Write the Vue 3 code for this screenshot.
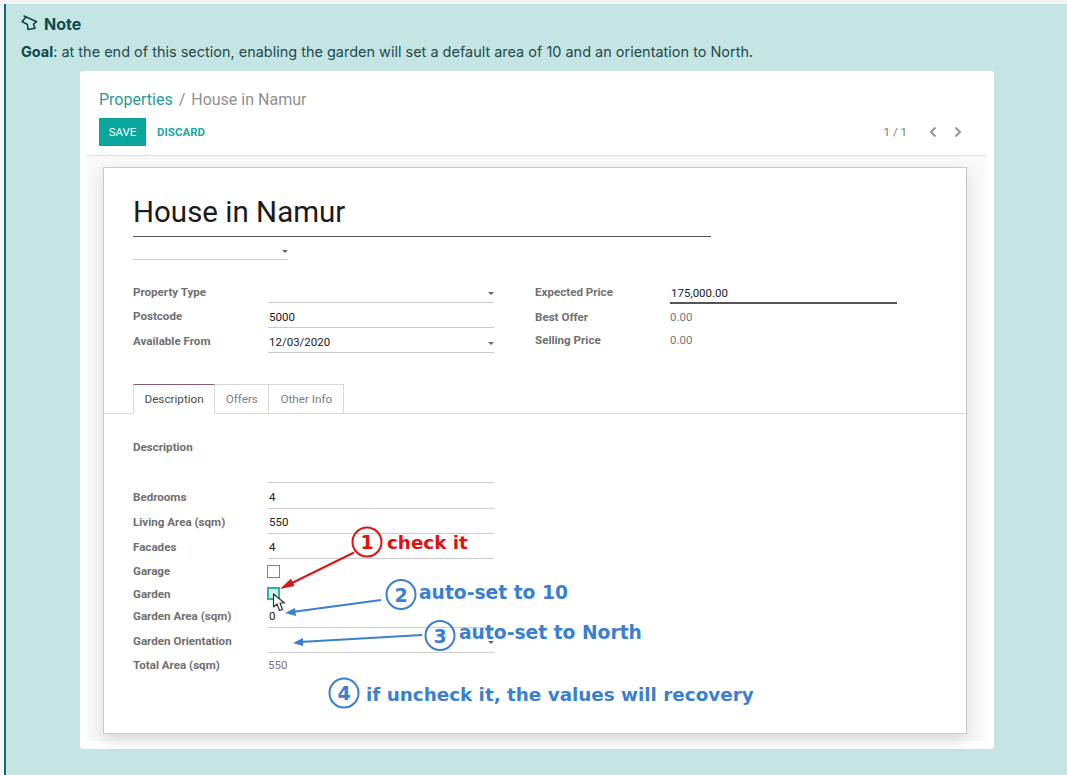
<template>
  <div class="page">
    <div class="note">
      <p class="note-title">
        <svg class="pin" width="18" height="18" viewBox="0 0 18 18" fill="none" stroke="#0b3d3d" stroke-width="1.5" stroke-linecap="round" stroke-linejoin="round">
          <path d="M3 1 L11 4.6 M5 2 L1 6.7 L6.5 9.5 L7 14.5 L14 13.3 L12.5 9 L15.7 6.7 L9 3.6" />
        </svg>
        Note
      </p>
      <p class="goal"><b>Goal</b>: at the end of this section, enabling the garden will set a default area of 10 and an orientation to North.</p>

      <div class="shot">
        <div class="control">
          <div class="crumbs"><span class="link">Properties</span><span class="sep">/</span><span>House in Namur</span></div>
          <div class="actions">
            <button class="save">SAVE</button>
            <button class="discard">DISCARD</button>
            <span class="pager">1 / 1</span>
            <svg width="10" height="12" viewBox="0 0 10 12" class="chev" fill="none" stroke="#8f959c" stroke-width="2"><path d="M7.5 1.5 L3 6 L7.5 10.5" /></svg>
            <svg width="10" height="12" viewBox="0 0 10 12" class="chev next" fill="none" stroke="#8f959c" stroke-width="2"><path d="M2.5 1.5 L7 6 L2.5 10.5" /></svg>
          </div>
        </div>

        <div class="bg">
          <div class="sheet">
            <div class="head">
              <h1>House in Namur</h1>
              <div class="tag-select"><i class="caret"></i></div>
            </div>

            <div class="groups">
              <div class="group left">
                <div v-for="f in leftFields" :key="f.label" class="row">
                  <label>{{ f.label }}</label>
                  <div class="input">{{ f.value }}<i v-if="f.select" class="caret"></i></div>
                </div>
              </div>
              <div class="group right">
                <div class="price-row first">
                  <label>Expected Price</label>
                  <div class="input strong">175,000.00</div>
                </div>
                <div class="price-row">
                  <label>Best Offer</label>
                  <span class="muted">0.00</span>
                </div>
                <div class="price-row">
                  <label>Selling Price</label>
                  <span class="muted">0.00</span>
                </div>
              </div>
            </div>

            <div class="tabs">
              <a v-for="(t, i) in tabs" :key="t" :class="{ active: i === 0 }">{{ t }}</a>
            </div>

            <div class="pane">
              <div class="desc-row">
                <label>Description</label>
                <div class="desc-input"></div>
              </div>
              <div v-for="f in detailFields" :key="f.label" class="row" :class="f.kind">
                <label>{{ f.label }}</label>
                <div v-if="f.kind === 'check'" class="box" :class="{ on: f.on }"></div>
                <div v-else-if="f.kind === 'text'" class="muted">{{ f.value }}</div>
                <div v-else class="input">{{ f.value }}<i v-if="f.select" class="caret"></i></div>
              </div>
            </div>
          </div>
        </div>
      </div>
    </div>

    <!-- annotations drawn over the screenshot -->
    <svg class="marks" width="1067" height="775" viewBox="0 0 1067 775" fill="none">
      <circle cx="367" cy="542" r="14.5" stroke="#e01010" stroke-width="2" />
      <text x="367" y="549" class="num red">1</text>
      <text x="387" y="548.5" class="say red small">check it</text>
      <path d="M354 552.5 L288 585" stroke="#d81818" stroke-width="2" />
      <path d="M280 589 L291 578.5 L294.5 586 Z" fill="#d81818" />

      <circle cx="401" cy="594.5" r="14.5" stroke="#3b7fd0" stroke-width="2" />
      <text x="401" y="601.5" class="num blue">2</text>
      <text x="419" y="598.5" class="say blue wide">auto-set to 10</text>
      <path d="M381 600 L292 612" stroke="#3b7fd0" stroke-width="2" />
      <path d="M285 613 L295 608 L296 616 Z" fill="#3b7fd0" />

      <circle cx="440" cy="635.5" r="14.5" stroke="#3b7fd0" stroke-width="2" />
      <text x="440" y="642.5" class="num blue">3</text>
      <text x="459" y="639" class="say blue wide">auto-set to North</text>
      <path d="M422 635 L300 642" stroke="#3b7fd0" stroke-width="2" />
      <path d="M293 643 L303 638 L303 646 Z" fill="#3b7fd0" />

      <circle cx="344" cy="693" r="14.5" stroke="#3b7fd0" stroke-width="2" />
      <text x="344" y="700" class="num blue">4</text>
      <text x="366" y="701" class="say blue small">if uncheck it, the values will recovery</text>

      <path d="M273.5 594 L273.5 607 L277 604 L279.5 610.5 L282.5 609.5 L280 603 L284.5 603 Z" fill="#fff" stroke="#333" stroke-width="1.2" stroke-linejoin="round" />
    </svg>
  </div>
</template>

<script setup>
const leftFields = [
  { label: 'Property Type', value: '', select: true },
  { label: 'Postcode', value: '5000' },
  { label: 'Available From', value: '12/03/2020', select: true },
]

const tabs = ['Description', 'Offers', 'Other Info']

const detailFields = [
  { label: 'Bedrooms', value: '4', kind: 'field' },
  { label: 'Living Area (sqm)', value: '550', kind: 'field' },
  { label: 'Facades', value: '4', kind: 'field' },
  { label: 'Garage', kind: 'check' },
  { label: 'Garden', kind: 'check', on: true },
  { label: 'Garden Area (sqm)', value: '0', kind: 'field' },
  { label: 'Garden Orientation', value: '', kind: 'field', select: true },
  { label: 'Total Area (sqm)', value: '550', kind: 'text' },
]
</script>

<style>
html,
body {
  background: #f3f4f5;
  overflow: hidden;
}
</style>

<style scoped>
.page {
  position: relative;
  width: 1067px;
  height: 775px;
  padding: 4px 0 0 4px;
  box-sizing: border-box;
  overflow: hidden;
  font-family: Roboto, "Liberation Sans", sans-serif;
}
.note {
  height: 771px;
  box-sizing: border-box;
  background: #c4e5e3;
  border-left: 2px solid #0f6d70;
  padding: 11px 0 0 15px;
  font-family: Inter, "Liberation Sans", sans-serif;
  color: #1f4a4c;
}
.note-title {
  display: flex;
  align-items: center;
  gap: 5px;
  margin: 0;
  height: 18px;
  font-size: 16px;
  font-weight: 700;
  color: #0b4a4d;
}
.goal {
  margin: 10px 0 0;
  height: 17px;
  line-height: 17px;
  font-size: 14.47px;
  white-space: nowrap;
}
.goal b {
  color: #0b4a4d;
}
.shot {
  width: 914px;
  height: 678px;
  margin: 11px 0 0 59px;
  background: #fff;
  border-radius: 3px;
  display: flex;
  flex-direction: column;
  font-family: Roboto, "Liberation Sans", sans-serif;
}
.control {
  height: 85px;
  margin: 0 7px;
  padding: 0 12px;
  box-sizing: border-box;
  border-bottom: 1px solid #dedede;
}
.crumbs {
  padding-top: 19px;
  height: 20px;
  line-height: 20px;
  font-size: 16px;
  color: #8f8f8f;
  display: flex;
  gap: 6px;
}
.crumbs .link {
  color: #2c9a97;
}
.actions {
  display: flex;
  align-items: center;
  margin-top: 8px;
  height: 28px;
}
.save {
  width: 47px;
  height: 28px;
  border: 0;
  padding: 0;
  background: #0aa59b;
  color: #fff;
  font: 400 11.5px Roboto, sans-serif;
}
.discard {
  border: 0;
  background: none;
  padding: 0;
  margin-left: 11px;
  color: #1aa9a0;
  font: 700 11.5px Roboto, sans-serif;
}
.pager {
  margin-left: auto;
  font-size: 11.5px;
  color: #777;
}
.chev {
  margin-left: 21px;
}
.chev.next {
  margin-left: 15px;
  margin-right: 12px;
}
.bg {
  flex: 1;
  margin: 0 7px 8px;
  padding: 11px 20px 7px 16px;
  background: #f9f9f9;
  display: flex;
  min-height: 0;
}
.sheet {
  flex: 1;
  box-sizing: border-box;
  background: #fff;
  border: 1px solid #c9c9c9;
  box-shadow: 0 6px 14px rgba(0, 0, 0, 0.13);
  padding: 0 0 0 29px;
  font-size: 11.5px;
  color: #333;
}
.head h1 {
  margin: 0;
  width: 578px;
  padding-top: 26px;
  height: 42px;
  line-height: 36px;
  font-size: 29.5px;
  font-weight: 400;
  color: #1b1b1b;
  border-bottom: 1px solid #555;
}
.tag-select {
  position: relative;
  width: 155px;
  height: 22px;
  border-bottom: 1px solid #ccc;
}
.tag-select .caret {
  top: 13px;
}
.caret {
  position: absolute;
  right: 0;
  top: 12px;
  border-top: 3px solid #666;
  border-left: 3px solid transparent;
  border-right: 3px solid transparent;
}
.groups {
  display: flex;
  margin-top: 20px;
  height: 104px;
}
.group.left {
  width: 402px;
}
.group.left .row + .row label {
  margin-top: -1px;
}
.row {
  display: flex;
  height: 25px;
}
label {
  display: block;
  width: 135px;
  flex: none;
  font-weight: 700;
  font-size: 11.6px;
  line-height: 25px;
  color: #707070;
  height: 25px;
}
.input {
  position: relative;
  width: 226px;
  box-sizing: border-box;
  padding-left: 1px;
  height: 23px;
  line-height: 25px;
  font-size: 11.5px;
  color: #222;
  border-bottom: 1px solid #ccc;
}
.pane .input {
  height: 24px;
}
.muted {
  color: #777;
  line-height: 25px;
  font-size: 11.5px;
}
.price-row {
  display: flex;
  height: 23.5px;
}
.price-row.first {
  height: 25px;
}
.price-row label {
  line-height: 24px;
}
.price-row:last-child label,
.price-row:last-child .muted {
  margin-top: -1px;
}
.input.strong {
  width: 227px;
  border-bottom: 2px solid #555;
  height: 24px;
  line-height: 26px;
}
.tabs {
  display: flex;
  height: 29px;
  margin-left: -29px;
  padding-left: 29px;
  border-bottom: 1px solid #d9d9d9;
  font-size: 11.7px;
}
.tabs a {
  box-sizing: border-box;
  height: 30px;
  line-height: 28px;
  padding: 0 10.5px;
  color: #808080;
  border: 1px solid #d9d9d9;
  border-left: 0;
}
.tabs a:last-child {
  padding: 0 11px;
}
.tabs a.active {
  border-left: 1px solid #d9d9d9;
  border-top-color: #8a5a75;
  border-bottom-color: #fff;
  color: #4c4c4c;
  background: #fff;
}
.pane {
  padding-top: 21px;
}
.desc-row {
  display: flex;
  height: 50px;
}
.desc-input {
  width: 226px;
  height: 48px;
  box-sizing: border-box;
  border-bottom: 1px solid #ccc;
}
.row.check {
  height: 22px;
  align-items: center;
}
.row.check + .row.check label {
  margin-top: 2px;
}
.row.text {
  margin-top: -1px;
}
.box {
  width: 13px;
  height: 13px;
  margin-left: -1px;
  box-sizing: border-box;
  background: #fff;
  border: 1.5px solid #808080;
}
.box.on {
  background: #d2f4ec;
  border: 2px solid #2fb39c;
}
.marks {
  position: absolute;
  left: 0;
  top: 0;
  pointer-events: none;
}
.say {
  font-family: "DejaVu Sans", sans-serif;
  font-weight: 700;
  font-size: 18.5px;
}
.say.small {
  font-size: 18.35px;
}
.say.wide {
  font-size: 18.7px;
}
.num {
  font-family: "DejaVu Sans", sans-serif;
  font-weight: 700;
  font-size: 19px;
  text-anchor: middle;
}
.red {
  fill: #e01010;
}
.blue {
  fill: #3b7fd0;
}
</style>
